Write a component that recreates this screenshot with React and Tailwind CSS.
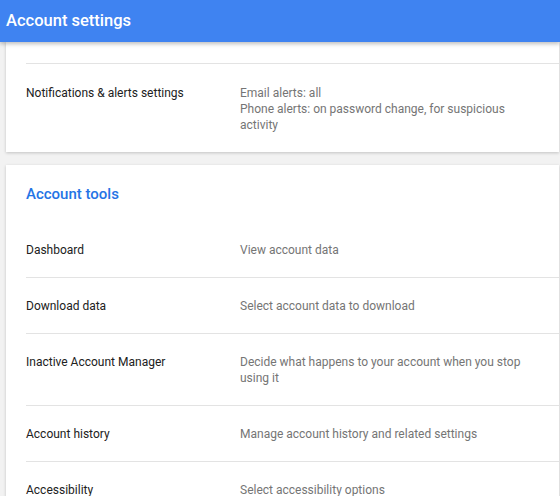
import React from 'react';

const tools = [
    { label: 'Dashboard', value: ['View account data'] },
    { label: 'Download data', value: ['Select account data to download'] },
    { label: 'Inactive Account Manager', value: ['Decide what happens to your account when you stop', 'using it'] },
    { label: 'Account history', value: ['Manage account history and related settings'] },
    { label: 'Accessibility', value: ['Select accessibility options'] },
];

const Row = ({ label, value, first }) => (
    <div className={`ml-5 flex pb-[19px] text-[12px] leading-4 ${first ? 'pt-[21px]' : 'border-t border-[#e3e3e3] pt-5'}`}>
        <div className="w-[214px] shrink-0 text-[#212121]">{label}</div>
        <div className="text-[#757575]">
            {value.map((v, i) => (
                <div key={i}>{v}</div>
            ))}
        </div>
    </div>
);

const App = () => {
    return (
        <div className="h-[496px] w-[560px] overflow-hidden bg-[#f2f2f2] font-['Roboto',sans-serif]">
            {/* Top bar */}
            <div className="relative z-10 flex h-[42px] items-center bg-[#3f83f1] px-[6px] shadow-[0_2px_4px_rgba(0,0,0,0.25)]">
                <h1 className="text-[16.5px] font-medium text-white">Account settings</h1>
            </div>

            {/* Scrolled card */}
            <div className="ml-[6px] mr-px bg-white pt-[21px] shadow-[0_1px_3px_rgba(0,0,0,0.2)]">
                <div className="ml-5 flex border-t border-[#e3e3e3] pb-[19px] pt-[21px] text-[12px] leading-4">
                    <div className="w-[214px] shrink-0 text-[#212121]">Notifications &amp; alerts settings</div>
                    <div className="text-[#757575]">
                        <div>Email alerts: all</div>
                        <div>Phone alerts: on password change, for suspicious</div>
                        <div>activity</div>
                    </div>
                </div>
            </div>

            {/* Account tools */}
            <div className="ml-[6px] mr-px mt-[13px] bg-white shadow-[0_1px_3px_rgba(0,0,0,0.2)]">
                <h2 className="px-5 pb-[17px] pt-[19px] text-[15px] font-medium leading-5 text-[#2474e5]">Account tools</h2>
                {tools.map((t, i) => (
                    <Row key={t.label} label={t.label} value={t.value} first={i === 0} />
                ))}
            </div>
        </div>
    );
};

export default App;
